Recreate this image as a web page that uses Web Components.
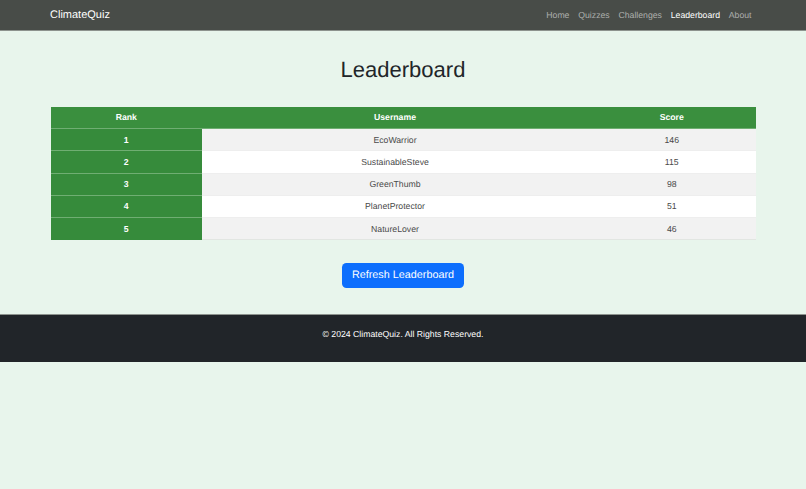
<!DOCTYPE html>
<html lang="en"><head><meta charset="utf-8"><title>ClimateQuiz</title>
<style>
html,body{margin:0;padding:0}
body{background:#e8f5ec;font-family:"Liberation Sans",Arial,sans-serif;color:#212529;text-rendering:geometricPrecision}
</style></head><body>
<site-nav brand="ClimateQuiz">
  <nav-link>Home</nav-link><nav-link>Quizzes</nav-link><nav-link>Challenges</nav-link><nav-link active>Leaderboard</nav-link><nav-link>About</nav-link>
</site-nav>
<leader-page heading="Leaderboard">
  <leader-table></leader-table>
  <refresh-button>Refresh Leaderboard</refresh-button>
</leader-page>
<site-footer>© 2024 ClimateQuiz. All Rights Reserved.</site-footer>
<script>
function shadow(el,html){el.attachShadow({mode:'open'}).innerHTML=html;}
customElements.define('site-nav',class extends HTMLElement{
  constructor(){super();shadow(this,`<style>
  :host{display:flex;align-items:center;justify-content:space-between;height:30.5px;box-sizing:border-box;padding:0 54.5px 0 50px;background:#484c48;border-bottom:1px solid #8d938e}
  .brand{font-size:11px;color:#fff}
  nav{display:flex;gap:8.8px}
  </style><span class="brand"></span><nav><slot></slot></nav>`);
  this.shadowRoot.querySelector('.brand').textContent=this.getAttribute('brand');}
});
customElements.define('nav-link',class extends HTMLElement{
  constructor(){super();shadow(this,`<style>
  :host{display:block;font-size:8.7px;color:rgba(255,255,255,.55);cursor:pointer}
  :host([active]){color:#fff}
  </style><slot></slot>`);}
});
customElements.define('leader-page',class extends HTMLElement{
  constructor(){super();shadow(this,`<style>
  :host{display:flex;flex-direction:column;align-items:center;padding:26.5px 50.5px 26px}
  h1{margin:0 0 23.5px;font-size:22px;font-weight:400;line-height:26px;color:#212529}
  </style><h1></h1><slot></slot>`);
  this.shadowRoot.querySelector('h1').textContent=this.getAttribute('heading');}
});
customElements.define('leader-table',class extends HTMLElement{
  constructor(){super();
  const rows=[['EcoWarrior',146],['SustainableSteve',115],['GreenThumb',98],['PlanetProtector',51],['NatureLover',46]];
  shadow(this,`<style>
  :host{display:block;width:100%;margin-bottom:22.5px;font-size:8.7px;color:#4a4a4a}
  table{width:100%;border-collapse:collapse;table-layout:fixed}
  th,td{height:22.2px;padding:0;text-align:center;box-sizing:border-box;border-bottom:1px solid #eeeeee}
  thead th{background:#3a8f3e;color:#fff;font-weight:700;border-bottom:1px solid #6fae72}
  tbody th{background:#368b3b;color:#fff;font-weight:700;border-bottom:1px solid #6fae72}
  tbody tr:nth-child(odd) td{background:#f2f2f2}
  tbody tr:nth-child(even) td{background:#fff}
  tbody tr:last-child td{border-bottom-color:#e2e6e2}
  tbody tr:last-child th{border-bottom-color:#368b3b}
  </style><table><colgroup><col style="width:151.5px"><col style="width:386px"><col style="width:167.5px"></colgroup>
  <thead><tr><th>Rank</th><th>Username</th><th>Score</th></tr></thead>
  <tbody>${rows.map((r,i)=>`<tr><th>${i+1}</th><td>${r[0]}</td><td>${r[1]}</td></tr>`).join('')}</tbody></table>`);}
});
customElements.define('refresh-button',class extends HTMLElement{
  constructor(){super();shadow(this,`<style>
  :host{display:block}
  button{display:block;width:122px;height:25.5px;padding:0;border:0;border-radius:4.5px;background:#0d6efd;color:#fff;font:10.8px "Liberation Sans",Arial,sans-serif;text-rendering:geometricPrecision;cursor:pointer}
  </style><button><slot></slot></button>`);}
});
customElements.define('site-footer',class extends HTMLElement{
  constructor(){super();shadow(this,`<style>
  :host{display:block;height:47.5px;box-sizing:border-box;padding-top:12.5px;background:#212529;border-top:1px solid #8d938e;color:#fff;text-align:center;font-size:8.7px;line-height:12px}
  </style><slot></slot>`);}
});
</script>
</body></html>
